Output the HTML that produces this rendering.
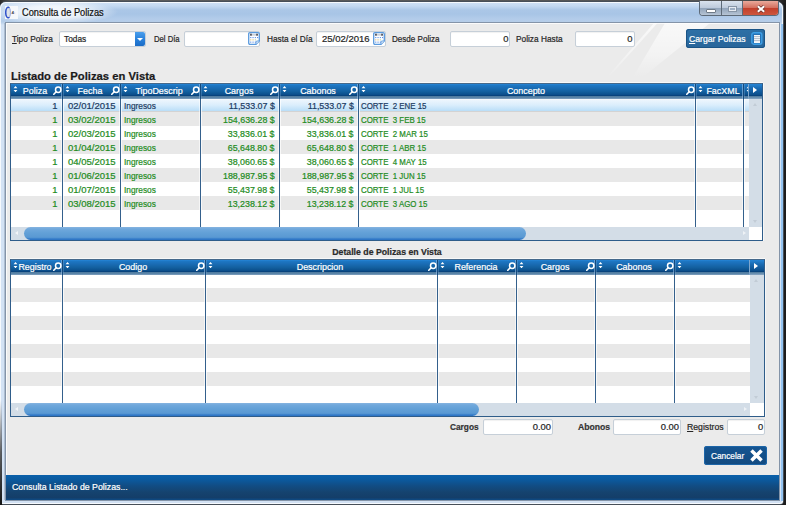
<!DOCTYPE html>
<html><head><meta charset="utf-8"><title>Consulta de Polizas</title>
<style>
html,body{margin:0;padding:0;width:786px;height:505px;overflow:hidden;background:#1c1c1c}
body{font-family:"Liberation Sans",sans-serif;font-size:9.4px;position:relative;color:#222}
.abs,.t,.mag,.cal{position:absolute}
.t{white-space:nowrap;line-height:1.15;transform-origin:0 0;color:#262626;-webkit-text-stroke:.22px currentColor}
.win{position:absolute;left:0;top:0;width:786px;height:505px;overflow:hidden}
.frame{position:absolute;left:-1px;top:1px;width:785px;height:504px;box-sizing:border-box;border:1px solid #474f59;border-radius:7px 7px 4px 4px;background:radial-gradient(ellipse 66px 12px at 52px 10px,rgba(255,255,255,.95),rgba(255,255,255,.75) 50%,rgba(255,255,255,0)),linear-gradient(#d0e1f5 0,#c4d9f1 4px,#abc7e7 8px,#a8c5e6 12px,#b3ccea 17px,#b6cde8 20px,#d3e2f4 23px,#d3e2f4 100%)}
.frame:before{content:"";position:absolute;left:0;top:0;right:0;bottom:0;border-radius:6px 6px 3px 3px;box-shadow:inset 0 0 0 1px rgba(255,255,255,.8)}
.frame:after{content:"";position:absolute;right:0;top:22px;width:2px;bottom:3px;background:#93c3f0}
.client{position:absolute;left:6px;top:23px;width:773px;height:477px;background:#ebebeb;box-shadow:0 0 0 1px #8494a8,-1.6px 0 0 0 #93a4ba,inset 1px 1px 0 #fbfbfb}
.shine{position:absolute;left:0;top:0}
.title{color:#111}
.inp{position:absolute;height:14px;background:#fff;border:1px solid #c6cfd8;border-radius:2px;box-shadow:inset 0 1px 1px rgba(0,0,0,.06)}
.grid{position:absolute;border:1px solid #2f5d8a;border-top-color:#46698b;background:#fff;overflow:hidden;box-shadow:0 -1px 0 #f8f8f8,1px 0 0 rgba(255,255,255,.6)}
.row{position:absolute;left:0}
.hdr{position:absolute;height:15px;background:linear-gradient(#2585d6 0,#1d76c2 1.5px,#1a6cb4 4px,#13609f 7.5px,#0c4f8c 10.5px,#07417a 11.7px,#4f7b9f 12.3px,#5f88ac 14px,#8aa8c4 15px)}
.sep{position:absolute;width:1px;background:#34608c;box-shadow:-1px 0 0 rgba(255,255,255,.55),1px 0 0 rgba(255,255,255,.7)}
.hs2{background:#154a7c;box-shadow:-1px 0 0 rgba(150,190,230,.6),1px 0 0 rgba(120,165,210,.35)}
.hd{color:#fff}
.gr{color:#1e8c1e}
.sel{color:#1c3c63}
.hbtn{position:absolute;height:15px;background:linear-gradient(#2585d6 0,#1a6cb4 4px,#0c4f8c 10.5px,#07417a 11.7px,#4f7b9f 12.3px,#8aa8c4 15px);box-shadow:-1px 0 0 #7fa6cc}
.hbtn i{position:absolute;left:4px;top:3px;border-left:4px solid #fff;border-top:3.5px solid transparent;border-bottom:3.5px solid transparent}
.vs{position:absolute;background:#d3dde7}
.hs{position:absolute;background:#d3dde7}
.corner{position:absolute;background:#fff}
.th{position:absolute;top:0;height:13px;border-radius:6.5px;background:linear-gradient(#86b4e0 0,#70a8dc 2px,#62a0d7 6px,#5a99d3 10px,#4c8fd0 11.2px,#2f76c6 11.8px,#2f76c6 13px)}
.vs b,.hs b{position:absolute;width:0;height:0}
.up{left:4px;top:4px;border-bottom:3px solid #c2ccd6;border-left:2.5px solid transparent;border-right:2.5px solid transparent}
.dn{left:4px;bottom:4px;border-top:3px solid #c2ccd6;border-left:2.5px solid transparent;border-right:2.5px solid transparent}
.lf{left:4px;top:4px;border-right:3px solid #f2f5f8;border-top:2.5px solid transparent;border-bottom:2.5px solid transparent}
.rt{right:3px;top:4px;border-left:3px solid #eef2f6;border-top:2.5px solid transparent;border-bottom:2.5px solid transparent}
.btn{position:absolute;border-radius:3px}
.status{position:absolute;left:0;top:452px;width:773px;height:25px;background:linear-gradient(#0a60aa 0,#0b5a9f 18%,#114d85 42%,#15436f 68%,#143e69 90%,#0e4a84 100%)}
u{text-decoration:underline}
</style></head><body>
<div class="win">
<div class="abs" style="left:0;top:0;width:786px;height:3px;background:linear-gradient(90deg,#2a2a2a 0,#5e5e5e 12px,#555 700px,#444 770px,#1c1c1c 786px)"></div>
<div class="frame"></div>
<div class="abs" style="left:0;top:400px;width:1.5px;height:105px;background:linear-gradient(rgba(30,30,30,0),rgba(30,30,30,.7) 50%,#151515)"></div>
<!-- title bar -->
<svg class="abs" style="left:5px;top:6px" width="13" height="13" viewBox="0 0 13 13"><rect width="13" height="13" fill="#f6f8fb"/><ellipse cx="3.1" cy="6.5" rx="2.3" ry="5.2" fill="#dfe3e8" stroke="#7d93d6" stroke-width=".8"/><path d="M4.4 1.9 A2.5 5.3 0 1 0 4.4 11.1" fill="none" stroke="#2f52cc" stroke-width="1.4"/><text x="6.6" y="8.4" font-size="4.4" font-weight="bold" font-family="Liberation Sans, sans-serif" fill="#3a3a44">4<tspan fill="#d99">:</tspan></text></svg>
<span class="t title" style="top:7.11px;font-size:10.4px;left:22.00px;transform:scaleX(0.89);">Consulta de Polizas</span>
<!-- window buttons -->
<div class="abs" style="left:699px;top:1px;width:80px;height:15px;border:1px solid #5d6a78;border-top:none;border-radius:0 0 4px 4px;overflow:hidden;box-sizing:border-box;background:#c9d7e6">
 <div class="abs" style="left:0;top:0;width:21px;height:15px;background:linear-gradient(#d9e2ed,#bdcadb 45%,#93a5bb 50%,#aebdcf 85%,#c0cddc);border-right:1px solid #5d6a78"></div>
 <div class="abs" style="left:22px;top:0;width:20px;height:15px;background:linear-gradient(#d9e2ed,#bdcadb 45%,#93a5bb 50%,#aebdcf 85%,#c0cddc);border-right:1px solid #5d6a78"></div>
 <div class="abs" style="left:43px;top:0;width:36px;height:15px;background:linear-gradient(#e9a99b,#d4705f 45%,#c2402c 50%,#cf5a41)"></div>
 <div class="abs" style="left:6px;top:8px;width:8px;height:2px;background:#fff;border:1px solid #6f7b88;border-radius:1px"></div>
 <div class="abs" style="left:29px;top:6px;width:5px;height:2px;border:1.5px solid #e6ebf2;outline:1px solid #8795a6;background:#9fafc3"></div>
 <svg class="abs" style="left:56.2px;top:4.3px" width="10" height="8" viewBox="0 0 10 8"><path d="M1.8 1.2 L8.2 6.8 M8.2 1.2 L1.8 6.8" stroke="#6e3630" stroke-width="3.4"/><path d="M1.8 1.2 L8.2 6.8 M8.2 1.2 L1.8 6.8" stroke="#fff" stroke-width="2"/></svg>
</div>
<div class="client">
<svg class="shine" width="773" height="70" viewBox="0 0 773 70"><defs><linearGradient id="sg" x1="0" y1="0" x2="0" y2="1"><stop offset="0" stop-color="#fff" stop-opacity=".7"/><stop offset=".6" stop-color="#fff" stop-opacity=".4"/><stop offset="1" stop-color="#fff" stop-opacity="0"/></linearGradient></defs><polygon points="648,0 651.5,0 603,54 601,54" fill="url(#sg)"/><polygon points="659,0 704,0 637,54 627,54" fill="url(#sg)"/></svg>
</div>
<!-- toolbar row : coordinates absolute in page -->
<span class="t " style="top:33.99px;font-size:9.4px;left:12.00px;transform:scaleX(0.885);"><u>T</u>ipo Poliza</span>
<div class="inp" style="left:59px;top:30.5px;width:85px"></div>
<span class="t " style="top:33.99px;font-size:9.4px;left:64.00px;transform:scaleX(0.885);">Todas</span>
<div class="abs" style="left:135px;top:32px;width:10px;height:14px;background:linear-gradient(#4a9eec,#2a82dc 50%,#1b6cc6);border-radius:0 2px 2px 0"><i class="abs" style="left:2px;top:6px;border-top:3px solid #fff;border-left:3px solid transparent;border-right:3px solid transparent"></i></div>
<span class="t " style="top:33.99px;font-size:9.4px;left:154.30px;transform:scaleX(0.82);">Del Día</span>
<div class="inp" style="left:184px;top:30.5px;width:74px"></div>
<svg class="cal" style="left:247.5px;top:32px" width="12" height="13" viewBox="0 0 12 13"><path d="M2 .7h8q1.3 0 1.3 1.3v7l-3.3 3.3h-6q-1.3 0-1.3-1.3v-9q0-1.3 1.3-1.3z" fill="#fdfeff" stroke="#5a9ade" stroke-width="1.3"/><path d="M11.3 9h-2.3q-1 0-1 1v2.3" fill="#e4eefa" stroke="#5a9ade" stroke-width=".9"/><path d="M3.6 2.9h4.8" stroke="#9aa3b0" stroke-width=".8"/><rect x="2.1" y="1.7" width="1.7" height="2" fill="#4a4a52"/><rect x="8.2" y="1.7" width="1.7" height="2" fill="#4a4a52"/><g fill="#5b8fe6"><rect x="2.2" y="5" width="1.1" height="1.1"/><rect x="4.5" y="5" width="1.1" height="1.1"/><rect x="6.8" y="5" width="1.1" height="1.1"/><rect x="9" y="5" width="1.1" height="1.1"/><rect x="2.2" y="7.3" width="1.1" height="1.1" fill="#e0c070"/><rect x="4.5" y="7.3" width="1.1" height="1.1" fill="#e0c070"/><rect x="6.8" y="7.3" width="1.1" height="1.1" fill="#b8d8a0"/><rect x="2.2" y="9.6" width="1.1" height="1.1"/><rect x="4.5" y="9.6" width="1.1" height="1.1"/><rect x="6.8" y="9.6" width="1.1" height="1.1"/></g></svg>
<span class="t " style="top:33.99px;font-size:9.4px;left:267.40px;transform:scaleX(0.885);">Hasta el Día</span>
<div class="inp" style="left:316px;top:30.5px;width:68px"></div>
<span class="t " style="top:33.99px;font-size:9.4px;left:322.00px;transform:scaleX(1.015);">25/02/2016</span>
<svg class="cal" style="left:373px;top:32px" width="12" height="13" viewBox="0 0 12 13"><path d="M2 .7h8q1.3 0 1.3 1.3v7l-3.3 3.3h-6q-1.3 0-1.3-1.3v-9q0-1.3 1.3-1.3z" fill="#fdfeff" stroke="#5a9ade" stroke-width="1.3"/><path d="M11.3 9h-2.3q-1 0-1 1v2.3" fill="#e4eefa" stroke="#5a9ade" stroke-width=".9"/><path d="M3.6 2.9h4.8" stroke="#9aa3b0" stroke-width=".8"/><rect x="2.1" y="1.7" width="1.7" height="2" fill="#4a4a52"/><rect x="8.2" y="1.7" width="1.7" height="2" fill="#4a4a52"/><g fill="#5b8fe6"><rect x="2.2" y="5" width="1.1" height="1.1"/><rect x="4.5" y="5" width="1.1" height="1.1"/><rect x="6.8" y="5" width="1.1" height="1.1"/><rect x="9" y="5" width="1.1" height="1.1"/><rect x="2.2" y="7.3" width="1.1" height="1.1" fill="#e0c070"/><rect x="4.5" y="7.3" width="1.1" height="1.1" fill="#e0c070"/><rect x="6.8" y="7.3" width="1.1" height="1.1" fill="#b8d8a0"/><rect x="2.2" y="9.6" width="1.1" height="1.1"/><rect x="4.5" y="9.6" width="1.1" height="1.1"/><rect x="6.8" y="9.6" width="1.1" height="1.1"/></g></svg>
<span class="t " style="top:33.99px;font-size:9.4px;left:392.40px;transform:scaleX(0.86);">Desde Poliza</span>
<div class="inp" style="left:450px;top:30.5px;width:58px"></div>
<span class="t " style="top:33.99px;font-size:9.4px;right:277.50px;transform-origin:100% 0;transform:scaleX(1.0);">0</span>
<span class="t " style="top:33.99px;font-size:9.4px;left:516.30px;transform:scaleX(0.885);">Poliza Hasta</span>
<div class="inp" style="left:575px;top:30.5px;width:58px"></div>
<span class="t " style="top:33.99px;font-size:9.4px;right:153.50px;transform-origin:100% 0;transform:scaleX(1.0);">0</span>
<div class="btn" style="left:686px;top:29px;width:79px;height:19px;background:linear-gradient(#2e70a6,#28659a);box-shadow:0 0 0 1px #1a5486 inset"></div>
<span class="t " style="top:34.29px;font-size:9.4px;left:688.70px;transform:scaleX(0.922);color:#fff"><u>C</u>argar Polizas</span>
<svg class="abs" style="left:751px;top:32px" width="12" height="13" viewBox="0 0 12 13"><rect x=".8" y=".8" width="10" height="11.4" rx="2" fill="#2672b5" stroke="#3fa0e6" stroke-width="1.4"/><rect x="3" y="3" width="6" height="8" fill="#f4f7fa"/><path d="M3 4.6h6M3 6.6h6M3 8.6h6" stroke="#a3adbd" stroke-width=".8"/></svg>
<span class="t " style="top:68.73px;font-size:11.6px;left:10.70px;transform:scaleX(0.97);font-weight:bold;color:#1a1a1a">Listado de Polizas en Vista</span>
<div class="grid" style="left:10px;top:83px;width:751px;height:156px">
<div class="row" style="top:15px;height:13px;width:738px;background:linear-gradient(#fff 0,#ecf5fd 1px,#dbeefc 6px,#bcdff8 11.5px,#b8dcf7 12px,#d3d3d3 12.2px,#d3d3d3 13px)"></div>
<div class="row" style="top:28px;height:14px;width:738px;background:#e8e8e8"></div>
<div class="row" style="top:42px;height:14px;width:738px;background:#fff"></div>
<div class="row" style="top:56px;height:14px;width:738px;background:#e8e8e8"></div>
<div class="row" style="top:70px;height:14px;width:738px;background:#fff"></div>
<div class="row" style="top:84px;height:14px;width:738px;background:#e8e8e8"></div>
<div class="row" style="top:98px;height:14px;width:738px;background:#fff"></div>
<div class="row" style="top:112px;height:14px;width:738px;background:#e8e8e8"></div>
<div class="row" style="top:126px;height:17px;width:738px;background:#fff"></div>
<div class="hdr" style="left:0;top:0;width:751px"></div>
<div class="sep hs2" style="left:51px;top:0;height:15px"></div><div class="sep" style="left:51px;top:15px;height:128px"></div>
<div class="sep hs2" style="left:109px;top:0;height:15px"></div><div class="sep" style="left:109px;top:15px;height:128px"></div>
<div class="sep hs2" style="left:189px;top:0;height:15px"></div><div class="sep" style="left:189px;top:15px;height:128px"></div>
<div class="sep hs2" style="left:268px;top:0;height:15px"></div><div class="sep" style="left:268px;top:15px;height:128px"></div>
<div class="sep hs2" style="left:347px;top:0;height:15px"></div><div class="sep" style="left:347px;top:15px;height:128px"></div>
<div class="sep hs2" style="left:684px;top:0;height:15px"></div><div class="sep" style="left:684px;top:15px;height:128px"></div>
<div class="sep hs2" style="left:732px;top:0;height:15px"></div><div class="sep" style="left:732px;top:15px;height:128px"></div>
<svg class="mag" style="left:2px;top:1.8px" width="5" height="6.4" viewBox="0 0 5 7"><path d="M2.5 0 L4.6 2.6 L0.4 2.6 Z M2.5 7 L4.6 4.4 L0.4 4.4 Z" fill="#fff"/></svg>
<svg class="mag" style="left:42px;top:2.4px" width="9" height="9" viewBox="0 0 9 9"><circle cx="5.2" cy="3.8" r="2.7" fill="none" stroke="#fff" stroke-width="1.5"/><path d="M3.2 5.8 L0.8 8.2" stroke="#fff" stroke-width="1.6" stroke-linecap="round"/></svg>
<span class="t hd" style="left:-75.7px;width:200px;text-align:center;top:2.09px;transform-origin:50% 0;transform:scaleX(0.9500)">Poliza</span>
<svg class="mag" style="left:54px;top:1.8px" width="5" height="6.4" viewBox="0 0 5 7"><path d="M2.5 0 L4.6 2.6 L0.4 2.6 Z M2.5 7 L4.6 4.4 L0.4 4.4 Z" fill="#fff"/></svg>
<svg class="mag" style="left:100px;top:2.4px" width="9" height="9" viewBox="0 0 9 9"><circle cx="5.2" cy="3.8" r="2.7" fill="none" stroke="#fff" stroke-width="1.5"/><path d="M3.2 5.8 L0.8 8.2" stroke="#fff" stroke-width="1.6" stroke-linecap="round"/></svg>
<span class="t hd" style="left:-20.7px;width:200px;text-align:center;top:2.09px;transform-origin:50% 0;transform:scaleX(0.9500)">Fecha</span>
<svg class="mag" style="left:112px;top:1.8px" width="5" height="6.4" viewBox="0 0 5 7"><path d="M2.5 0 L4.6 2.6 L0.4 2.6 Z M2.5 7 L4.6 4.4 L0.4 4.4 Z" fill="#fff"/></svg>
<svg class="mag" style="left:180px;top:2.4px" width="9" height="9" viewBox="0 0 9 9"><circle cx="5.2" cy="3.8" r="2.7" fill="none" stroke="#fff" stroke-width="1.5"/><path d="M3.2 5.8 L0.8 8.2" stroke="#fff" stroke-width="1.6" stroke-linecap="round"/></svg>
<span class="t hd" style="left:48.3px;width:200px;text-align:center;top:2.09px;transform-origin:50% 0;transform:scaleX(0.9500)">TipoDescrip</span>
<svg class="mag" style="left:192px;top:1.8px" width="5" height="6.4" viewBox="0 0 5 7"><path d="M2.5 0 L4.6 2.6 L0.4 2.6 Z M2.5 7 L4.6 4.4 L0.4 4.4 Z" fill="#fff"/></svg>
<svg class="mag" style="left:259px;top:2.4px" width="9" height="9" viewBox="0 0 9 9"><circle cx="5.2" cy="3.8" r="2.7" fill="none" stroke="#fff" stroke-width="1.5"/><path d="M3.2 5.8 L0.8 8.2" stroke="#fff" stroke-width="1.6" stroke-linecap="round"/></svg>
<span class="t hd" style="left:127.8px;width:200px;text-align:center;top:2.09px;transform-origin:50% 0;transform:scaleX(0.9500)">Cargos</span>
<svg class="mag" style="left:271px;top:1.8px" width="5" height="6.4" viewBox="0 0 5 7"><path d="M2.5 0 L4.6 2.6 L0.4 2.6 Z M2.5 7 L4.6 4.4 L0.4 4.4 Z" fill="#fff"/></svg>
<svg class="mag" style="left:338px;top:2.4px" width="9" height="9" viewBox="0 0 9 9"><circle cx="5.2" cy="3.8" r="2.7" fill="none" stroke="#fff" stroke-width="1.5"/><path d="M3.2 5.8 L0.8 8.2" stroke="#fff" stroke-width="1.6" stroke-linecap="round"/></svg>
<span class="t hd" style="left:206.8px;width:200px;text-align:center;top:2.09px;transform-origin:50% 0;transform:scaleX(0.9500)">Cabonos</span>
<svg class="mag" style="left:350px;top:1.8px" width="5" height="6.4" viewBox="0 0 5 7"><path d="M2.5 0 L4.6 2.6 L0.4 2.6 Z M2.5 7 L4.6 4.4 L0.4 4.4 Z" fill="#fff"/></svg>
<svg class="mag" style="left:675px;top:2.4px" width="9" height="9" viewBox="0 0 9 9"><circle cx="5.2" cy="3.8" r="2.7" fill="none" stroke="#fff" stroke-width="1.5"/><path d="M3.2 5.8 L0.8 8.2" stroke="#fff" stroke-width="1.6" stroke-linecap="round"/></svg>
<span class="t hd" style="left:414.8px;width:200px;text-align:center;top:2.09px;transform-origin:50% 0;transform:scaleX(0.9500)">Concepto</span>
<svg class="mag" style="left:687px;top:1.8px" width="5" height="6.4" viewBox="0 0 5 7"><path d="M2.5 0 L4.6 2.6 L0.4 2.6 Z M2.5 7 L4.6 4.4 L0.4 4.4 Z" fill="#fff"/></svg>
<span class="t hd" style="left:611.8px;width:200px;text-align:center;top:2.09px;transform-origin:50% 0;transform:scaleX(0.9500)">FacXML</span>
<svg class="mag" style="left:735px;top:1.8px" width="5" height="6.4" viewBox="0 0 5 7"><path d="M2.5 0 L4.6 2.6 L0.4 2.6 Z M2.5 7 L4.6 4.4 L0.4 4.4 Z" fill="#fff"/></svg>
<div class="hbtn" style="left:738px;top:0;width:13px"><i></i></div>
<div class="vs" style="left:738px;top:15px;width:13px;height:128px"><b class="up"></b><b class="dn"></b></div>
<div class="hs" style="left:0;top:143px;width:738px;height:13px"><b class="lf"></b><b class="rt"></b><div class="th" style="left:13px;width:502px"></div></div>
<div class="corner" style="left:738px;top:143px;width:13px;height:13px"></div>
<span class="t sel" style="top:16.89px;right:704.5px;transform-origin:100% 0;transform:scaleX(1.0000)">1</span>
<span class="t sel" style="top:16.89px;left:57.3px;transform:scaleX(1.0150)">02/01/2015</span>
<span class="t sel" style="top:16.89px;left:112.7px;transform:scaleX(0.8850)">Ingresos</span>
<span class="t sel" style="top:16.89px;right:487.5px;transform-origin:100% 0;transform:scaleX(0.9450)">11,533.07 $</span>
<span class="t sel" style="top:16.89px;right:408.5px;transform-origin:100% 0;transform:scaleX(0.9450)">11,533.07 $</span>
<span class="t sel" style="top:16.89px;left:350.2px;transform:scaleX(0.8400)">CORTE&nbsp; 2 ENE 15</span>
<span class="t gr" style="top:30.89px;right:704.5px;transform-origin:100% 0;transform:scaleX(1.0000)">1</span>
<span class="t gr" style="top:30.89px;left:57.3px;transform:scaleX(1.0150)">03/02/2015</span>
<span class="t gr" style="top:30.89px;left:112.7px;transform:scaleX(0.8850)">Ingresos</span>
<span class="t gr" style="top:30.89px;right:487.5px;transform-origin:100% 0;transform:scaleX(0.9450)">154,636.28 $</span>
<span class="t gr" style="top:30.89px;right:408.5px;transform-origin:100% 0;transform:scaleX(0.9450)">154,636.28 $</span>
<span class="t gr" style="top:30.89px;left:350.2px;transform:scaleX(0.8400)">CORTE&nbsp; 3 FEB 15</span>
<span class="t gr" style="top:44.89px;right:704.5px;transform-origin:100% 0;transform:scaleX(1.0000)">1</span>
<span class="t gr" style="top:44.89px;left:57.3px;transform:scaleX(1.0150)">02/03/2015</span>
<span class="t gr" style="top:44.89px;left:112.7px;transform:scaleX(0.8850)">Ingresos</span>
<span class="t gr" style="top:44.89px;right:487.5px;transform-origin:100% 0;transform:scaleX(0.9450)">33,836.01 $</span>
<span class="t gr" style="top:44.89px;right:408.5px;transform-origin:100% 0;transform:scaleX(0.9450)">33,836.01 $</span>
<span class="t gr" style="top:44.89px;left:350.2px;transform:scaleX(0.8400)">CORTE&nbsp; 2 MAR 15</span>
<span class="t gr" style="top:58.89px;right:704.5px;transform-origin:100% 0;transform:scaleX(1.0000)">1</span>
<span class="t gr" style="top:58.89px;left:57.3px;transform:scaleX(1.0150)">01/04/2015</span>
<span class="t gr" style="top:58.89px;left:112.7px;transform:scaleX(0.8850)">Ingresos</span>
<span class="t gr" style="top:58.89px;right:487.5px;transform-origin:100% 0;transform:scaleX(0.9450)">65,648.80 $</span>
<span class="t gr" style="top:58.89px;right:408.5px;transform-origin:100% 0;transform:scaleX(0.9450)">65,648.80 $</span>
<span class="t gr" style="top:58.89px;left:350.2px;transform:scaleX(0.8400)">CORTE&nbsp; 1 ABR 15</span>
<span class="t gr" style="top:72.89px;right:704.5px;transform-origin:100% 0;transform:scaleX(1.0000)">1</span>
<span class="t gr" style="top:72.89px;left:57.3px;transform:scaleX(1.0150)">04/05/2015</span>
<span class="t gr" style="top:72.89px;left:112.7px;transform:scaleX(0.8850)">Ingresos</span>
<span class="t gr" style="top:72.89px;right:487.5px;transform-origin:100% 0;transform:scaleX(0.9450)">38,060.65 $</span>
<span class="t gr" style="top:72.89px;right:408.5px;transform-origin:100% 0;transform:scaleX(0.9450)">38,060.65 $</span>
<span class="t gr" style="top:72.89px;left:350.2px;transform:scaleX(0.8400)">CORTE&nbsp; 4 MAY 15</span>
<span class="t gr" style="top:86.89px;right:704.5px;transform-origin:100% 0;transform:scaleX(1.0000)">1</span>
<span class="t gr" style="top:86.89px;left:57.3px;transform:scaleX(1.0150)">01/06/2015</span>
<span class="t gr" style="top:86.89px;left:112.7px;transform:scaleX(0.8850)">Ingresos</span>
<span class="t gr" style="top:86.89px;right:487.5px;transform-origin:100% 0;transform:scaleX(0.9450)">188,987.95 $</span>
<span class="t gr" style="top:86.89px;right:408.5px;transform-origin:100% 0;transform:scaleX(0.9450)">188,987.95 $</span>
<span class="t gr" style="top:86.89px;left:350.2px;transform:scaleX(0.8400)">CORTE&nbsp; 1 JUN 15</span>
<span class="t gr" style="top:100.89px;right:704.5px;transform-origin:100% 0;transform:scaleX(1.0000)">1</span>
<span class="t gr" style="top:100.89px;left:57.3px;transform:scaleX(1.0150)">01/07/2015</span>
<span class="t gr" style="top:100.89px;left:112.7px;transform:scaleX(0.8850)">Ingresos</span>
<span class="t gr" style="top:100.89px;right:487.5px;transform-origin:100% 0;transform:scaleX(0.9450)">55,437.98 $</span>
<span class="t gr" style="top:100.89px;right:408.5px;transform-origin:100% 0;transform:scaleX(0.9450)">55,437.98 $</span>
<span class="t gr" style="top:100.89px;left:350.2px;transform:scaleX(0.8400)">CORTE&nbsp; 1 JUL 15</span>
<span class="t gr" style="top:114.89px;right:704.5px;transform-origin:100% 0;transform:scaleX(1.0000)">1</span>
<span class="t gr" style="top:114.89px;left:57.3px;transform:scaleX(1.0150)">03/08/2015</span>
<span class="t gr" style="top:114.89px;left:112.7px;transform:scaleX(0.8850)">Ingresos</span>
<span class="t gr" style="top:114.89px;right:487.5px;transform-origin:100% 0;transform:scaleX(0.9450)">13,238.12 $</span>
<span class="t gr" style="top:114.89px;right:408.5px;transform-origin:100% 0;transform:scaleX(0.9450)">13,238.12 $</span>
<span class="t gr" style="top:114.89px;left:350.2px;transform:scaleX(0.8400)">CORTE&nbsp; 3 AGO 15</span>
</div>
<span class="t " style="top:247.28px;font-size:9.2px;left:237.40px;width:300px;text-align:center;transform-origin:50% 0;transform:scaleX(0.95);font-weight:bold;color:#2a2a2a">Detalle de Polizas en Vista</span>
<div class="grid" style="left:10px;top:259px;width:753px;height:156px">
<div class="row" style="top:15px;height:13px;width:739px;background:#fff"></div>
<div class="row" style="top:28px;height:14px;width:739px;background:#e8e8e8"></div>
<div class="row" style="top:42px;height:14px;width:739px;background:#fff"></div>
<div class="row" style="top:56px;height:14px;width:739px;background:#e8e8e8"></div>
<div class="row" style="top:70px;height:14px;width:739px;background:#fff"></div>
<div class="row" style="top:84px;height:14px;width:739px;background:#e8e8e8"></div>
<div class="row" style="top:98px;height:14px;width:739px;background:#fff"></div>
<div class="row" style="top:112px;height:14px;width:739px;background:#e8e8e8"></div>
<div class="row" style="top:126px;height:17px;width:739px;background:#fff"></div>
<div class="hdr" style="left:0;top:0;width:753px"></div>
<div class="sep hs2" style="left:51px;top:0;height:15px"></div><div class="sep" style="left:51px;top:15px;height:128px"></div>
<div class="sep hs2" style="left:194px;top:0;height:15px"></div><div class="sep" style="left:194px;top:15px;height:128px"></div>
<div class="sep hs2" style="left:426px;top:0;height:15px"></div><div class="sep" style="left:426px;top:15px;height:128px"></div>
<div class="sep hs2" style="left:505px;top:0;height:15px"></div><div class="sep" style="left:505px;top:15px;height:128px"></div>
<div class="sep hs2" style="left:584px;top:0;height:15px"></div><div class="sep" style="left:584px;top:15px;height:128px"></div>
<div class="sep hs2" style="left:663px;top:0;height:15px"></div><div class="sep" style="left:663px;top:15px;height:128px"></div>
<svg class="mag" style="left:2px;top:1.8px" width="5" height="6.4" viewBox="0 0 5 7"><path d="M2.5 0 L4.6 2.6 L0.4 2.6 Z M2.5 7 L4.6 4.4 L0.4 4.4 Z" fill="#fff"/></svg>
<svg class="mag" style="left:42px;top:2.4px" width="9" height="9" viewBox="0 0 9 9"><circle cx="5.2" cy="3.8" r="2.7" fill="none" stroke="#fff" stroke-width="1.5"/><path d="M3.2 5.8 L0.8 8.2" stroke="#fff" stroke-width="1.6" stroke-linecap="round"/></svg>
<span class="t hd" style="left:-75.7px;width:200px;text-align:center;top:2.09px;transform-origin:50% 0;transform:scaleX(0.9500)">Registro</span>
<svg class="mag" style="left:54px;top:1.8px" width="5" height="6.4" viewBox="0 0 5 7"><path d="M2.5 0 L4.6 2.6 L0.4 2.6 Z M2.5 7 L4.6 4.4 L0.4 4.4 Z" fill="#fff"/></svg>
<svg class="mag" style="left:185px;top:2.4px" width="9" height="9" viewBox="0 0 9 9"><circle cx="5.2" cy="3.8" r="2.7" fill="none" stroke="#fff" stroke-width="1.5"/><path d="M3.2 5.8 L0.8 8.2" stroke="#fff" stroke-width="1.6" stroke-linecap="round"/></svg>
<span class="t hd" style="left:21.8px;width:200px;text-align:center;top:2.09px;transform-origin:50% 0;transform:scaleX(0.9500)">Codigo</span>
<svg class="mag" style="left:197px;top:1.8px" width="5" height="6.4" viewBox="0 0 5 7"><path d="M2.5 0 L4.6 2.6 L0.4 2.6 Z M2.5 7 L4.6 4.4 L0.4 4.4 Z" fill="#fff"/></svg>
<svg class="mag" style="left:417px;top:2.4px" width="9" height="9" viewBox="0 0 9 9"><circle cx="5.2" cy="3.8" r="2.7" fill="none" stroke="#fff" stroke-width="1.5"/><path d="M3.2 5.8 L0.8 8.2" stroke="#fff" stroke-width="1.6" stroke-linecap="round"/></svg>
<span class="t hd" style="left:209.3px;width:200px;text-align:center;top:2.09px;transform-origin:50% 0;transform:scaleX(0.9500)">Descripcion</span>
<svg class="mag" style="left:429px;top:1.8px" width="5" height="6.4" viewBox="0 0 5 7"><path d="M2.5 0 L4.6 2.6 L0.4 2.6 Z M2.5 7 L4.6 4.4 L0.4 4.4 Z" fill="#fff"/></svg>
<svg class="mag" style="left:496px;top:2.4px" width="9" height="9" viewBox="0 0 9 9"><circle cx="5.2" cy="3.8" r="2.7" fill="none" stroke="#fff" stroke-width="1.5"/><path d="M3.2 5.8 L0.8 8.2" stroke="#fff" stroke-width="1.6" stroke-linecap="round"/></svg>
<span class="t hd" style="left:364.8px;width:200px;text-align:center;top:2.09px;transform-origin:50% 0;transform:scaleX(0.9500)">Referencia</span>
<svg class="mag" style="left:508px;top:1.8px" width="5" height="6.4" viewBox="0 0 5 7"><path d="M2.5 0 L4.6 2.6 L0.4 2.6 Z M2.5 7 L4.6 4.4 L0.4 4.4 Z" fill="#fff"/></svg>
<svg class="mag" style="left:575px;top:2.4px" width="9" height="9" viewBox="0 0 9 9"><circle cx="5.2" cy="3.8" r="2.7" fill="none" stroke="#fff" stroke-width="1.5"/><path d="M3.2 5.8 L0.8 8.2" stroke="#fff" stroke-width="1.6" stroke-linecap="round"/></svg>
<span class="t hd" style="left:443.8px;width:200px;text-align:center;top:2.09px;transform-origin:50% 0;transform:scaleX(0.9500)">Cargos</span>
<svg class="mag" style="left:587px;top:1.8px" width="5" height="6.4" viewBox="0 0 5 7"><path d="M2.5 0 L4.6 2.6 L0.4 2.6 Z M2.5 7 L4.6 4.4 L0.4 4.4 Z" fill="#fff"/></svg>
<svg class="mag" style="left:654px;top:2.4px" width="9" height="9" viewBox="0 0 9 9"><circle cx="5.2" cy="3.8" r="2.7" fill="none" stroke="#fff" stroke-width="1.5"/><path d="M3.2 5.8 L0.8 8.2" stroke="#fff" stroke-width="1.6" stroke-linecap="round"/></svg>
<span class="t hd" style="left:522.8px;width:200px;text-align:center;top:2.09px;transform-origin:50% 0;transform:scaleX(0.9500)">Cabonos</span>
<svg class="mag" style="left:666px;top:1.8px" width="5" height="6.4" viewBox="0 0 5 7"><path d="M2.5 0 L4.6 2.6 L0.4 2.6 Z M2.5 7 L4.6 4.4 L0.4 4.4 Z" fill="#fff"/></svg>
<div class="hbtn" style="left:739px;top:0;width:14px"><i></i></div>
<div class="vs" style="left:739px;top:15px;width:14px;height:128px"><b class="up"></b><b class="dn"></b></div>
<div class="hs" style="left:0;top:143px;width:739px;height:13px"><b class="lf"></b><b class="rt"></b><div class="th" style="left:13px;width:455px"></div></div>
<div class="corner" style="left:739px;top:143px;width:14px;height:13px"></div>
</div>
<!-- totals -->
<span class="t " style="top:421.09px;font-size:9.6px;left:449.80px;transform:scaleX(0.865);font-weight:bold;color:#333">Cargos</span>
<div class="inp" style="left:483px;top:419px;width:68px"></div>
<span class="t " style="top:422.29px;font-size:9.4px;right:235.00px;transform-origin:100% 0;transform:scaleX(1.0);">0.00</span>
<span class="t " style="top:421.09px;font-size:9.6px;left:577.80px;transform:scaleX(0.9);font-weight:bold;color:#333">Abonos</span>
<div class="inp" style="left:613px;top:419px;width:66px"></div>
<span class="t " style="top:422.29px;font-size:9.4px;right:107.00px;transform-origin:100% 0;transform:scaleX(1.0);">0.00</span>
<span class="t " style="top:422.29px;font-size:9.4px;left:687.40px;transform:scaleX(0.925);"><u>R</u>egistros</span>
<div class="inp" style="left:727px;top:419px;width:36px"></div>
<span class="t " style="top:422.29px;font-size:9.4px;right:22.70px;transform-origin:100% 0;transform:scaleX(1.0);">0</span>
<div class="btn" style="left:704px;top:446px;width:63px;height:19px;background:linear-gradient(#155592,#124a80);box-shadow:0 0 0 1px #1c65a8 inset"></div>
<span class="t " style="top:451.29px;font-size:9.4px;left:710.70px;transform:scaleX(0.885);color:#fff">Cancelar</span>
<svg class="abs" style="left:750px;top:449px" width="13" height="13" viewBox="0 0 13 13"><path d="M2.7 2.7 L10.3 10.3 M10.3 2.7 L2.7 10.3" stroke="#fff" stroke-width="3.5" stroke-linecap="square"/></svg>
<div class="status" style="left:6px;top:475px"></div>
<span class="t " style="top:481.89px;font-size:9.4px;left:11.80px;transform:scaleX(0.937);color:#fff">Consulta Listado de Polizas...</span>
</div>
</body></html>
